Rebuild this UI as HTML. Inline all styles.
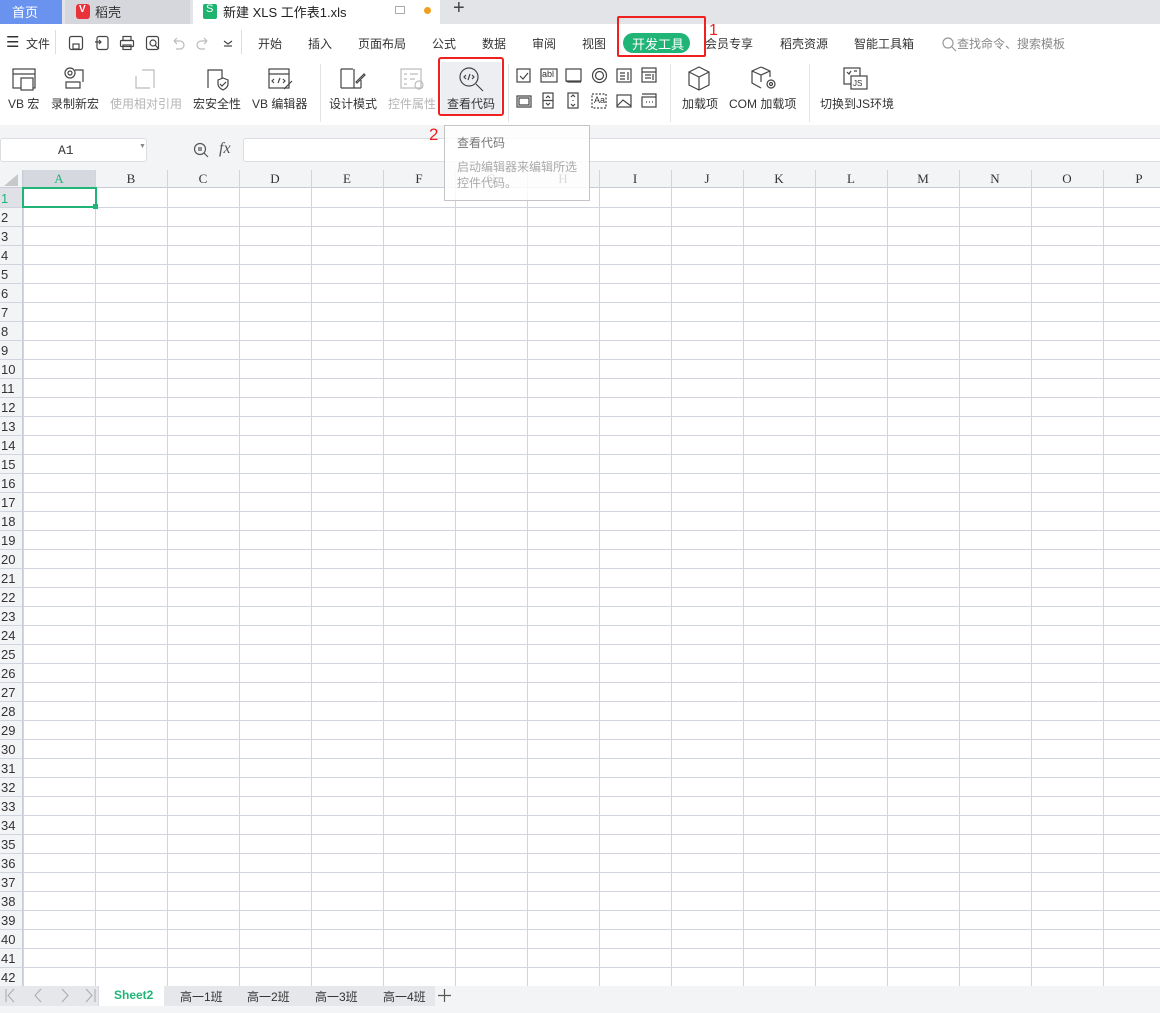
<!DOCTYPE html>
<html><head><meta charset="utf-8"><style>
*{margin:0;padding:0;box-sizing:border-box}
body{width:1160px;height:1013px;overflow:hidden;position:relative;background:#fff;font-family:"Liberation Sans","Noto Sans CJK SC",sans-serif;font-size:12px;color:#333}
.a{position:absolute}
.t{position:absolute;white-space:nowrap}
svg{position:absolute;fill:none;stroke:#444;stroke-width:1.2}
.lab{position:absolute;font-size:12px;color:#333;white-space:nowrap;top:95px}
.dis{color:#b5b5b5}
.col{position:absolute;top:170px;height:18px;line-height:18px;font-family:"Liberation Serif",serif;font-size:13px;color:#333;text-align:center;width:72px}
.rn{position:absolute;left:0;width:22px;text-align:left;padding-left:1px;font-size:13px;height:19px;line-height:21px;color:#333;font-family:"Liberation Sans",sans-serif}
</style></head><body>
<div class="a" style="left:0;top:0;width:1160px;height:24px;background:#e3e4e8"></div>
<div class="a" style="left:0;top:0;width:62px;height:24px;background:#6a93f0"></div>
<div class="t" style="left:12px;top:2px;color:#fff;font-size:13px">首页</div>
<div class="a" style="left:65px;top:0;width:125px;height:24px;background:#d5d7dc"></div>
<div class="a" style="left:76px;top:4px;width:14px;height:15px;background:#e8333a;border-radius:3px"></div>
<div class="t" style="left:79px;top:4px;color:#fff;font-size:10px;font-weight:bold">V</div>
<div class="t" style="left:95px;top:2px;font-size:13px">稻壳</div>
<div class="a" style="left:193px;top:0;width:247px;height:24px;background:#fff"></div>
<div class="a" style="left:203px;top:4px;width:14px;height:15px;background:#1fb370;border-radius:2px"></div>
<div class="t" style="left:206px;top:3px;color:#fff;font-size:11px">S</div>
<div class="t" style="left:223px;top:2px;font-size:13px;color:#222">新建 XLS 工作表1.xls</div>
<div class="a" style="left:395px;top:6px;width:10px;height:8px;border:1px solid #aaa"></div>
<div class="a" style="left:424px;top:7px;width:7px;height:7px;border-radius:50%;background:#f0a020"></div>
<div class="t" style="left:453px;top:-3px;font-size:20px;color:#444">+</div>
<div class="t" style="left:6px;top:33px;font-size:15px">☰</div>
<div class="t" style="left:26px;top:35px;font-size:12px">文件</div>
<div class="a" style="left:55px;top:30px;width:1px;height:24px;background:#ddd"></div>
<svg style="left:68px;top:35px" width="16" height="16"><rect x="1.5" y="1.5" width="13" height="13" rx="2"/><rect x="5" y="9" width="6" height="5"/></svg>
<svg style="left:94px;top:35px" width="16" height="16"><rect x="3" y="1.5" width="11" height="13" rx="2"/><path d="M1 7h6M5 5l2 2-2 2"/></svg>
<svg style="left:119px;top:35px" width="16" height="16"><rect x="4" y="1.5" width="8" height="4"/><rect x="1.5" y="5.5" width="13" height="6" rx="1"/><rect x="4" y="10" width="8" height="4.5"/></svg>
<svg style="left:145px;top:35px" width="16" height="16"><rect x="1.5" y="1.5" width="12" height="13" rx="2"/><circle cx="8" cy="8" r="3"/><path d="M10 10l4 4"/></svg>
<svg style="left:170px;top:35px;stroke:#bbb" width="16" height="16"><path d="M4 6h6a4 4 0 010 8H6M4 6l3-3M4 6l3 3"/></svg>
<svg style="left:195px;top:35px;stroke:#bbb" width="16" height="16"><path d="M12 6H6a4 4 0 000 8h4M12 6L9 3M12 6L9 9"/></svg>
<svg style="left:222px;top:38px" width="12" height="10"><path d="M2 3l4 3 4-3"/><path d="M2 8h8"/></svg>
<div class="a" style="left:241px;top:30px;width:1px;height:24px;background:#ddd"></div>
<div class="t" style="left:258px;top:35px">开始</div>
<div class="t" style="left:308px;top:35px">插入</div>
<div class="t" style="left:358px;top:35px">页面布局</div>
<div class="t" style="left:432px;top:35px">公式</div>
<div class="t" style="left:482px;top:35px">数据</div>
<div class="t" style="left:532px;top:35px">审阅</div>
<div class="t" style="left:582px;top:35px">视图</div>
<div class="a" style="left:623px;top:33px;width:67px;height:20px;border-radius:10px;background:#21b477"></div>
<div class="t" style="left:632px;top:34px;color:#fff;font-size:13px">开发工具</div>
<div class="t" style="left:705px;top:35px">会员专享</div>
<div class="t" style="left:780px;top:35px">稻壳资源</div>
<div class="t" style="left:854px;top:35px">智能工具箱</div>
<svg style="left:941px;top:36px;stroke:#999" width="16" height="16"><circle cx="7" cy="7" r="5"/><path d="M11 11l4 4"/></svg>
<div class="t" style="left:957px;top:35px;color:#888">查找命令、搜索模板</div>
<div class="a" style="left:617px;top:16px;width:89px;height:41px;border:2px solid #f02020;border-radius:2px"></div>
<div class="t" style="left:709px;top:22px;color:#f02020;font-size:16px">1</div>
<svg style="left:12px;top:68px" width="26" height="24"><rect x="1" y="1" width="22" height="19"/><path d="M1 6h22"/><rect x="9" y="10" width="12" height="12" fill="#fff"/></svg>
<div class="lab" style="left:8px">VB 宏</div>
<svg style="left:62px;top:66px" width="26" height="26"><circle cx="8" cy="7" r="5"/><circle cx="8" cy="7" r="2"/><path d="M13 4h8v12M4 16h14v6H4z"/></svg>
<div class="lab" style="left:51px">录制新宏</div>
<svg style="left:134px;top:68px;stroke:#bbb" width="24" height="24"><path d="M8 2h12v18M2 8v12h14"/></svg>
<div class="lab dis" style="left:110px">使用相对引用</div>
<svg style="left:204px;top:66px" width="26" height="26"><path d="M4 22V4h14v8"/><path d="M14 14l5-2 5 2v4c0 3-3 5-5 6-2-1-5-3-5-6z"/><path d="M16 18l2 2 4-4"/></svg>
<div class="lab" style="left:193px">宏安全性</div>
<svg style="left:268px;top:68px" width="26" height="24"><rect x="1" y="1" width="20" height="19"/><path d="M1 6h20M6 11l-2 2 2 2M10 15l2-5M15 11l2 2-2 2M16 21l8-8"/></svg>
<div class="lab" style="left:252px">VB 编辑器</div>
<div class="a" style="left:320px;top:64px;width:1px;height:58px;background:#e3e3e3"></div>
<svg style="left:340px;top:68px" width="26" height="24"><path d="M1 20h20M1 1h12M21 12v8M1 1v19M14 1v19"/><path d="M16 14l8-8 1 1-8 8z"/></svg>
<div class="lab" style="left:329px">设计模式</div>
<svg style="left:400px;top:68px;stroke:#bbb" width="26" height="24"><rect x="1" y="1" width="20" height="19"/><path d="M4 6h3M10 6h8M4 11h3M10 11h5M4 16h3"/><circle cx="19" cy="17" r="4"/></svg>
<div class="lab dis" style="left:388px">控件属性</div>
<div class="a" style="left:441px;top:62px;width:60px;height:52px;background:#eceef1"></div>
<svg style="left:458px;top:66px" width="28" height="28"><circle cx="11" cy="11" r="9"/><path d="M18 18l7 7M8 9l-2 2 2 2M10 14l2-6M14 9l2 2-2 2"/></svg>
<div class="lab" style="left:447px">查看代码</div>
<div class="a" style="left:438px;top:57px;width:66px;height:59px;border:2px solid #f02020;border-radius:3px"></div>
<div class="a" style="left:508px;top:64px;width:1px;height:58px;background:#e3e3e3"></div>
<svg style="left:516px;top:68px" width="15" height="15"><rect x="1" y="1" width="13" height="13"/><path d="M4 8l3 3 5-6"/></svg>
<svg style="left:540px;top:68px" width="18" height="15"><rect x="1" y="1" width="16" height="13"/></svg>
<div class="t" style="left:542px;top:69px;font-size:9px">abl</div>
<svg style="left:565px;top:68px" width="18" height="15"><rect x="1" y="1" width="15" height="12"/><path d="M1 13l2 1h13"/></svg>
<svg style="left:591px;top:67px" width="17" height="17"><circle cx="8.5" cy="8.5" r="7"/><circle cx="8.5" cy="8.5" r="4"/></svg>
<svg style="left:616px;top:68px" width="16" height="15"><rect x="1" y="1" width="14" height="13"/><path d="M4 5h5M4 8h5M4 11h5M12 4v8"/></svg>
<svg style="left:641px;top:67px" width="16" height="16"><rect x="1" y="1" width="14" height="14"/><path d="M1 5h14M4 8h6M4 11h6M12 7v6"/></svg>
<svg style="left:516px;top:94px" width="16" height="14"><path d="M1 2h14v11H1zM3 4h10v7H3z"/></svg>
<svg style="left:542px;top:92px" width="12" height="17"><rect x="1" y="1" width="10" height="15"/><path d="M1 8.5h10M4 6l2-2 2 2M4 11l2 2 2-2"/></svg>
<svg style="left:567px;top:92px" width="12" height="17"><rect x="1" y="1" width="10" height="15"/><path d="M4 5l2-2 2 2M4 12l2 2 2-2M6 8v1"/></svg>
<svg style="left:591px;top:93px;stroke-dasharray:2 1.5" width="16" height="16"><rect x="1" y="1" width="14" height="14"/></svg>
<div class="t" style="left:594px;top:95px;font-size:9px">Aa</div>
<svg style="left:616px;top:94px" width="16" height="14"><rect x="1" y="1" width="14" height="12"/><path d="M1 12l6-6 8 6"/></svg>
<svg style="left:641px;top:93px" width="16" height="15"><rect x="1" y="4" width="14" height="10"/><path d="M1 1h14v3M5 9h1M8 9h1M11 9h1"/></svg>
<div class="a" style="left:670px;top:64px;width:1px;height:58px;background:#e3e3e3"></div>
<svg style="left:687px;top:66px" width="24" height="26"><path d="M12 1l10 5v13l-10 5-10-5V6z"/><path d="M2 6l10 5 10-5M12 11v13"/></svg>
<div class="lab" style="left:682px">加载项</div>
<svg style="left:751px;top:66px" width="26" height="26"><path d="M10 1l9 4v6M10 1L1 5v12l9 5"/><path d="M1 5l9 4 9-4M10 9v7"/><circle cx="20" cy="18" r="4"/><circle cx="20" cy="18" r="1.5"/></svg>
<div class="lab" style="left:729px">COM 加载项</div>
<div class="a" style="left:809px;top:64px;width:1px;height:58px;background:#e3e3e3"></div>
<svg style="left:843px;top:67px" width="26" height="26"><rect x="1" y="1" width="16" height="16"/><rect x="8" y="9" width="16" height="13" fill="#fff"/><path d="M4 5l2 2 2-3M11 4h3"/></svg>
<div class="t" style="left:853px;top:79px;font-size:8px">JS</div>
<div class="lab" style="left:820px">切换到JS环境</div>
<div class="a" style="left:0;top:125px;width:1160px;height:45px;background:#f3f4f6"></div>
<div class="a" style="left:0;top:138px;width:147px;height:24px;background:#fff;border:1px solid #dcdde0;border-radius:3px"></div>
<div class="t" style="left:58px;top:143px;font-family:'Liberation Mono',monospace;font-size:13px">A1</div>
<div class="t" style="left:139px;top:143px;font-size:7px;color:#888">▼</div>
<svg style="left:193px;top:142px;stroke:#555" width="17" height="17"><circle cx="7" cy="7" r="5.5"/><path d="M5 6h4M5 8h4M11 11l4 4"/></svg>
<div class="t" style="left:219px;top:140px;font-family:'Liberation Serif',serif;font-style:italic;font-size:16px;color:#555">fx</div>
<div class="a" style="left:243px;top:138px;width:930px;height:24px;background:#fff;border:1px solid #dcdde0;border-radius:3px"></div>
<div class="a" style="left:0;top:170px;width:1160px;height:18px;background:#f3f4f6;border-bottom:1px solid #c8ccd6"></div>
<div class="a" style="left:23px;top:170px;width:72px;height:18px;background:#d5d8df"></div>
<div class="a" style="left:0;top:188px;width:23px;height:798px;background:#f3f4f6"></div>
<div class="a" style="left:0;top:188px;width:23px;height:19px;background:#dfe1e6"></div>
<div class="a" style="left:4px;top:174px;width:0;height:0;border-left:14px solid transparent;border-bottom:12px solid #c6c8cc"></div>
<div class="a" style="left:23px;top:170px;width:1137px;height:816px;background-image:linear-gradient(to right,#d0d4dc 1px,transparent 1px);background-size:72px 100%;background-position:0 0"></div>
<div class="a" style="left:0;top:189px;width:1160px;height:797px;background-image:linear-gradient(to bottom,transparent 18px,#d0d4dc 18px);background-size:100% 19px"></div>
<div class="a" style="left:22px;top:170px;width:1px;height:816px;background:#c8ccd6"></div>
<div class="col" style="left:23px;color:#21b477">A</div><div class="col" style="left:95px">B</div><div class="col" style="left:167px">C</div><div class="col" style="left:239px">D</div><div class="col" style="left:311px">E</div><div class="col" style="left:383px">F</div><div class="col" style="left:455px">G</div><div class="col" style="left:527px">H</div><div class="col" style="left:599px">I</div><div class="col" style="left:671px">J</div><div class="col" style="left:743px">K</div><div class="col" style="left:815px">L</div><div class="col" style="left:887px">M</div><div class="col" style="left:959px">N</div><div class="col" style="left:1031px">O</div><div class="col" style="left:1103px">P</div>
<div class="rn" style="top:188px;color:#21b477">1</div><div class="rn" style="top:207px">2</div><div class="rn" style="top:226px">3</div><div class="rn" style="top:245px">4</div><div class="rn" style="top:264px">5</div><div class="rn" style="top:283px">6</div><div class="rn" style="top:302px">7</div><div class="rn" style="top:321px">8</div><div class="rn" style="top:340px">9</div><div class="rn" style="top:359px">10</div><div class="rn" style="top:378px">11</div><div class="rn" style="top:397px">12</div><div class="rn" style="top:416px">13</div><div class="rn" style="top:435px">14</div><div class="rn" style="top:454px">15</div><div class="rn" style="top:473px">16</div><div class="rn" style="top:492px">17</div><div class="rn" style="top:511px">18</div><div class="rn" style="top:530px">19</div><div class="rn" style="top:549px">20</div><div class="rn" style="top:568px">21</div><div class="rn" style="top:587px">22</div><div class="rn" style="top:606px">23</div><div class="rn" style="top:625px">24</div><div class="rn" style="top:644px">25</div><div class="rn" style="top:663px">26</div><div class="rn" style="top:682px">27</div><div class="rn" style="top:701px">28</div><div class="rn" style="top:720px">29</div><div class="rn" style="top:739px">30</div><div class="rn" style="top:758px">31</div><div class="rn" style="top:777px">32</div><div class="rn" style="top:796px">33</div><div class="rn" style="top:815px">34</div><div class="rn" style="top:834px">35</div><div class="rn" style="top:853px">36</div><div class="rn" style="top:872px">37</div><div class="rn" style="top:891px">38</div><div class="rn" style="top:910px">39</div><div class="rn" style="top:929px">40</div><div class="rn" style="top:948px">41</div><div class="rn" style="top:967px">42</div>
<div class="a" style="left:22px;top:187px;width:75px;height:21px;border:2px solid #21b477"></div>
<div class="a" style="left:93px;top:204px;width:5px;height:5px;background:#21b477"></div>
<div class="a" style="left:444px;top:125px;width:146px;height:76px;background:rgba(255,255,255,0.82);border:1px solid #c4c4c4"></div>
<div class="t" style="left:457px;top:134px;color:#777;font-size:12px">查看代码</div>
<div class="t" style="left:457px;top:159px;color:#aaa;font-size:12px;line-height:16px">启动编辑器来编辑所选<br>控件代码。</div>
<div class="t" style="left:429px;top:125px;color:#f02020;font-size:17px">2</div>
<div class="a" style="left:0;top:986px;width:1160px;height:27px;background:#f3f4f6"></div>
<div class="a" style="left:0;top:986px;width:435px;height:20px;background:#e6e7eb"></div>
<svg style="left:4px;top:988px;stroke:#aaa;stroke-width:1" width="95" height="15"><path d="M2 1v13M10 1L4 7.5 10 14M37 1l-6 6.5 6 6.5M58 1l6 6.5-6 6.5M82 1l6 6.5-6 6.5M91 1v13"/></svg>
<div class="a" style="left:98px;top:986px;width:1px;height:20px;background:#d5d7dc"></div>
<div class="a" style="left:99px;top:986px;width:65px;height:20px;background:#fff"></div>
<div class="t" style="left:114px;top:988px;color:#21b477;font-weight:bold;font-size:12px">Sheet2</div>
<div class="t" style="left:180px;top:988px">高一1班</div>
<div class="t" style="left:247px;top:988px">高一2班</div>
<div class="t" style="left:315px;top:988px">高一3班</div>
<div class="t" style="left:383px;top:988px">高一4班</div>
<svg style="left:437px;top:988px;stroke:#555;stroke-width:1.2" width="15" height="15"><path d="M7.5 1v13M1 7.5h13"/></svg>
</body></html>
